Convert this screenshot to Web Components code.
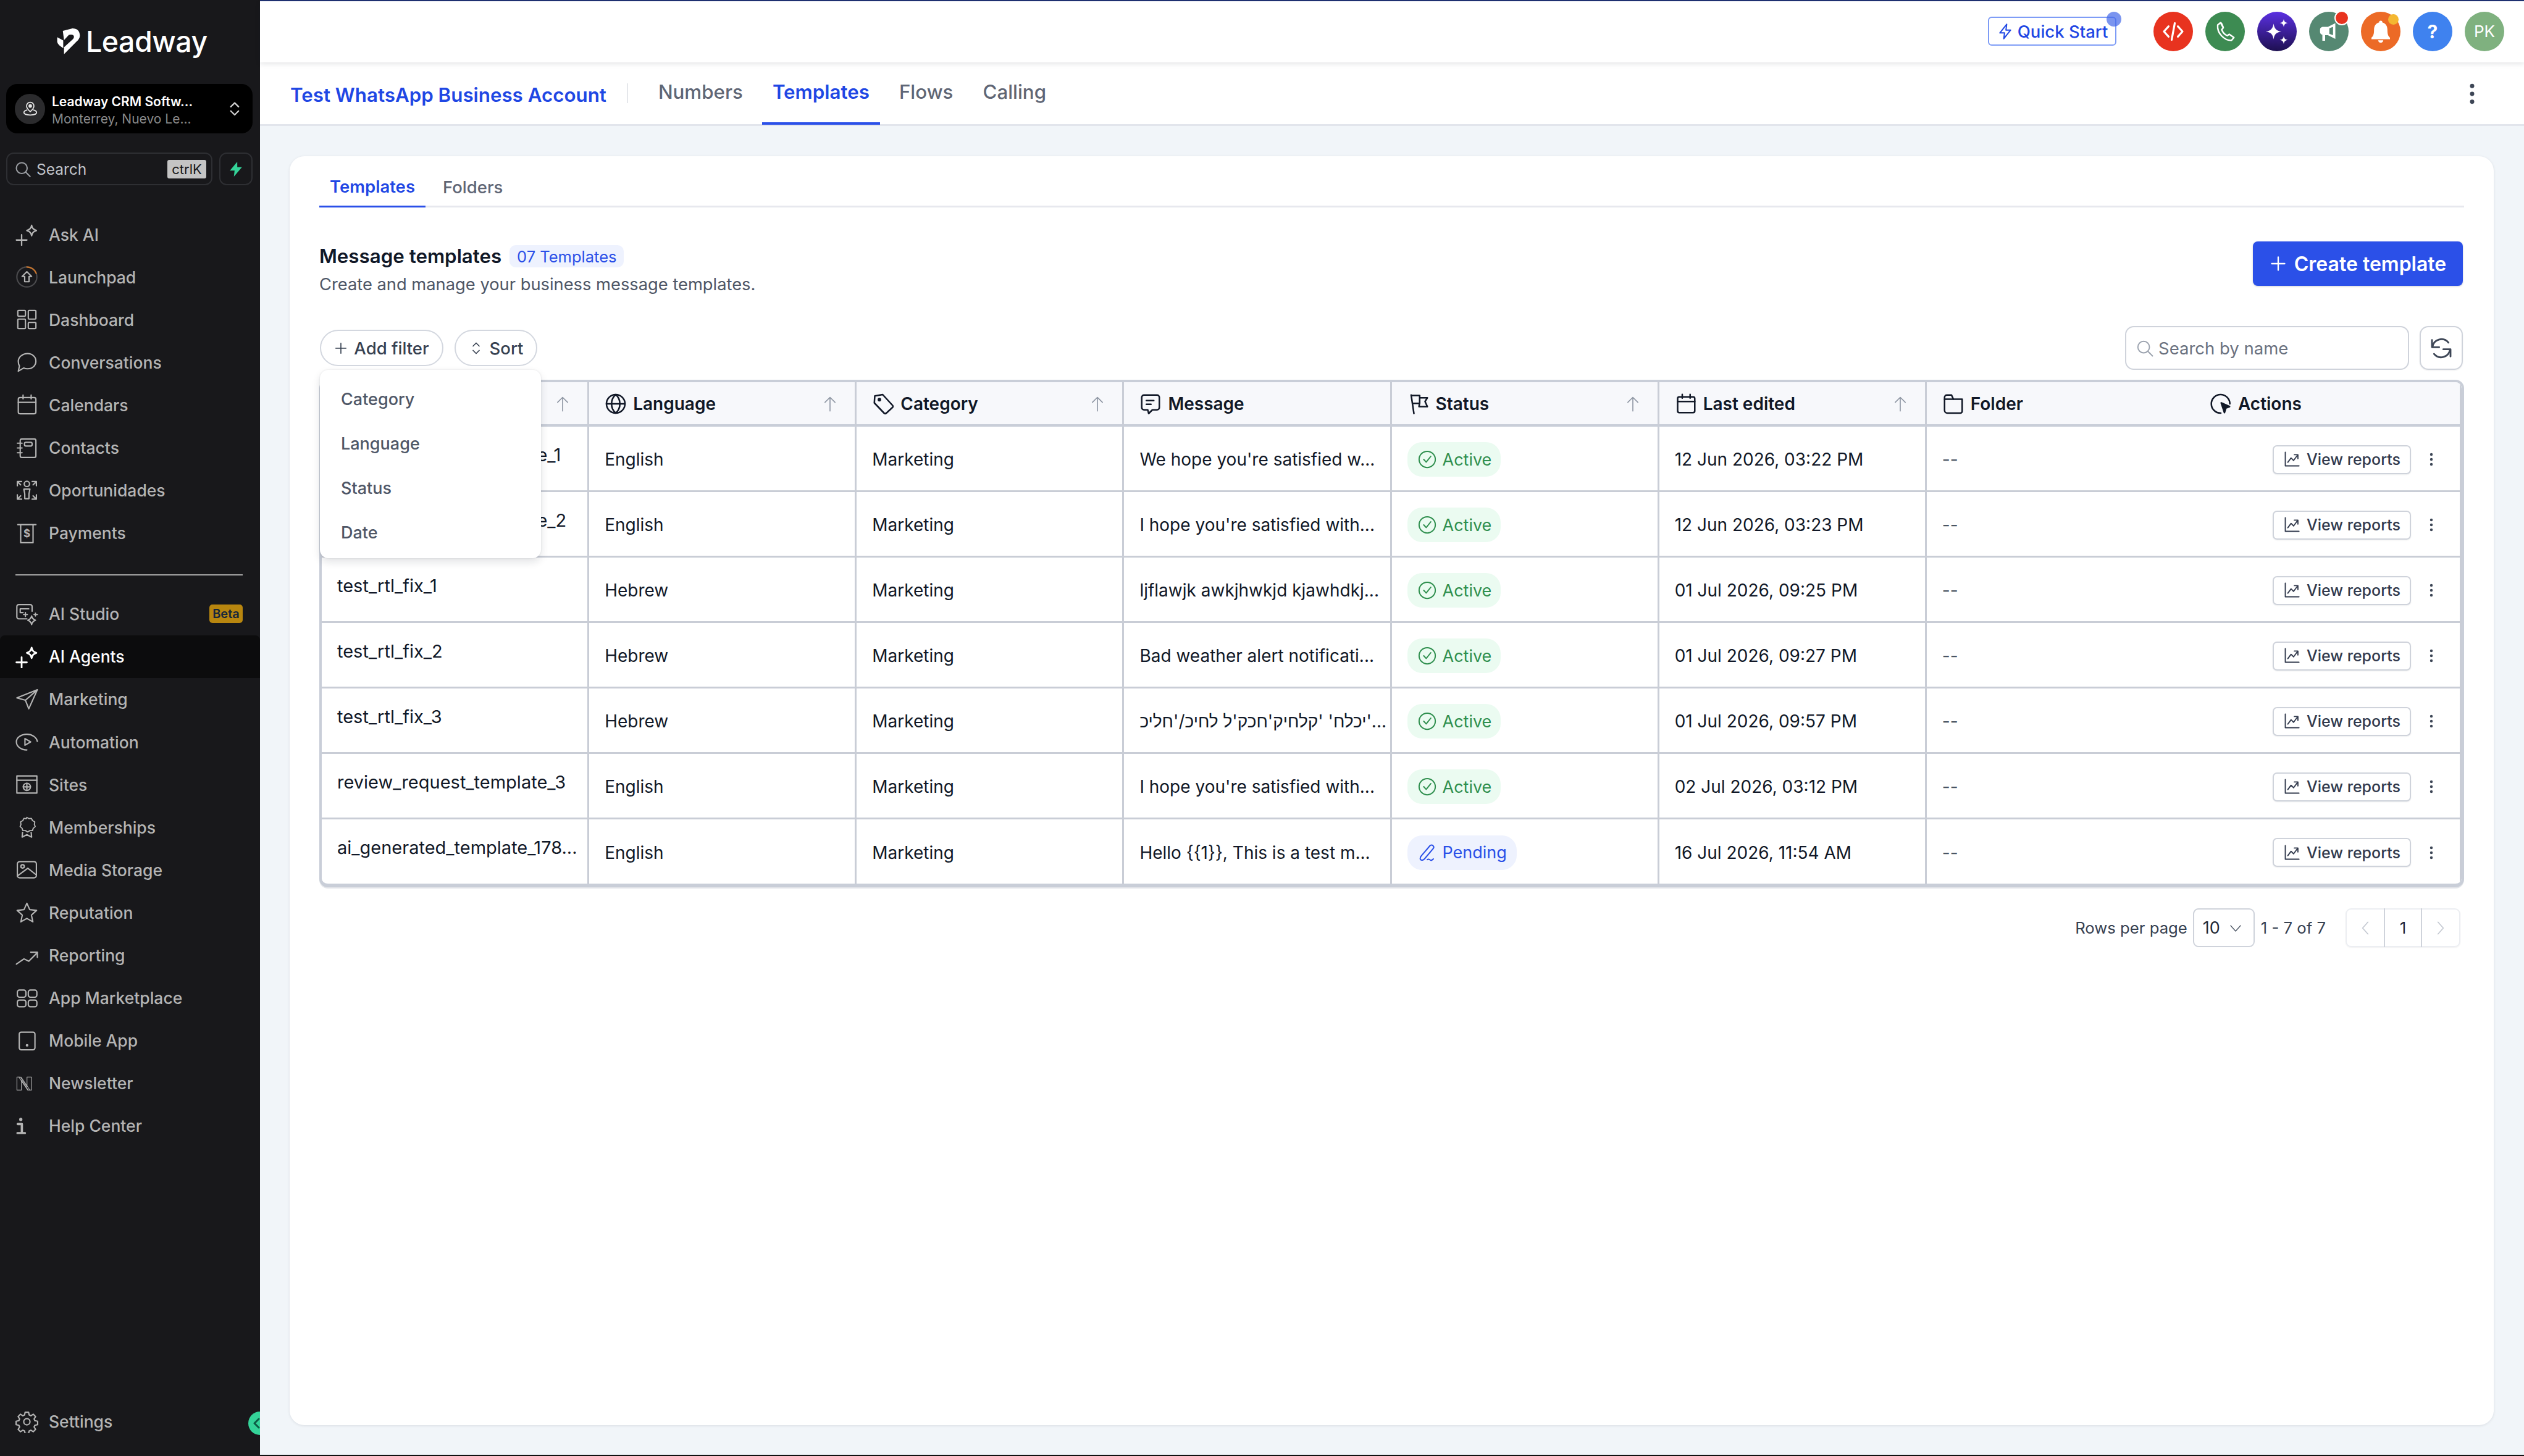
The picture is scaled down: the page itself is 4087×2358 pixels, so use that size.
<!DOCTYPE html>
<html lang="en"><head><meta charset="utf-8"><title>Leadway</title>
<style>
html,body{margin:0;padding:0;height:100%;background:#f1f5f9}
body{font-family:Inter,"Liberation Sans","Noto Sans",sans-serif;overflow:hidden}
</style></head>
<body>
<lw-app>
  <lw-sidebar slot="side"></lw-sidebar>
  <lw-topbar slot="main"></lw-topbar>
  <lw-subnav slot="main"></lw-subnav>
  <lw-content slot="main">
    <lw-card>
      <lw-tabs></lw-tabs>
      <lw-heading></lw-heading>
      <lw-toolbar></lw-toolbar>
      <lw-table></lw-table>
      <lw-pager></lw-pager>
    </lw-card>
  </lw-content>
</lw-app>
<script>
const ICONS={
askai:'<path d="M1 18h11M6.5 12.5v11"/><path d="M17 2.5c.6 3 1.6 4.3 5 5.5-3.4 1.2-4.4 2.5-5 5.5-.6-3-1.6-4.3-5-5.5 3.4-1.2 4.4-2.500 5-5.500z"/>',
launch:'<circle cx="12" cy="12" r="10.500" stroke="#4a4a4d"/><path d="M12 1.500a10.500 10.500 0 0 1 9.800 6.700" stroke="#c8742c"/><path d="M12 6.500l5 5h-2.700v5.500H9.700v-5.500H7z"/>',
dash:'<rect x="2.500" y="2.500" width="8" height="6" rx=".8"/><rect x="13.500" y="2.500" width="8" height="9" rx=".8"/><rect x="2.500" y="11.500" width="8" height="10" rx=".8"/><rect x="13.500" y="15" width="8" height="6.500" rx=".8"/>',
chat:'<path d="M12.800 3c5 0 8.700 3.500 8.700 8s-3.700 8-8.700 8c-1.500 0-2.900-.3-4-.9L3 21.500l1.200-5.400C3.400 14.700 3 13 3 11.200 3 6.500 7.500 3 12.800 3z"/>',
cal:'<rect x="3" y="4.500" width="18.500" height="17" rx="1.800"/><path d="M3 9.500h18.500M8 1.800v4M16.500 1.800v4"/>',
contacts:'<rect x="5" y="2.500" width="16.500" height="19.500" rx="1.800"/><rect x="9.500" y="6" width="8" height="4" rx="1.500"/><path d="M2 7h5M2 12h5M2 17h5"/>',
opp:'<circle cx="12" cy="5" r="2.800"/><path d="M8.800 10.500h6.400l-1 5v5h-4.400v-5z"/><path d="M2 7V2.500h4.500M2 2.500l3.500 3.500M22 7V2.500h-4.500M22 2.500L18.500 6M2 16.500V21h4.500M2 21l3.500-3.500M22 16.500V21h-4.500M22 21l-3.500-3.500"/>',
pay:'<path d="M2.500 3h19M5.500 3V22h13V3"/><text x="12" y="16" font-size="11" font-weight="700" text-anchor="middle" fill="currentColor" stroke="none" font-family="Inter">$</text>',
studio:'<path d="M12 17H3.500A2 2 0 0 1 1.500 15V4A2 2 0 0 1 3.500 2h12a2 2 0 0 1 2 2v5"/><path d="M5 6.500h9M5 6.500v4h3"/><path d="M17 14c.5 2.500 1.300 3.500 4 4.500-2.700 1-3.500 2-4 4.500-.5-2.500-1.300-3.500-4-4.500 2.700-1 3.500-2 4-4.500z"/><path d="M10.500 10.500v4M8.500 12.500h4M21 11v3M19.500 12.500h3.500"/>',
plane:'<path d="M23 2L1.500 10.500l9 2.500 3.500 9zM10.500 13L23 2"/>',
auto:'<path d="M23 11.500a11 9 0 0 0-11-7.500C6 4 1 7.500 1 12s4.500 8.500 11 8.500"/><path d="M10 8.500l6 3.500-6 3.500z"/>',
site:'<rect x="1.500" y="3" width="21" height="18"/><path d="M1.500 7.500h21"/><circle cx="12" cy="14.500" r="3.800"/><path d="M8.200 14.500h7.600M12 10.700v7.600"/>',
medal:'<path d="M12 2l2.500 1.500 3-.3 1.300 2.700 2.700 1.500-.5 3 1 2.600-2.300 2-1 2.800-3 0-2.700 1.600-2.700-1.600-3 0-1-2.800-2.300-2 1-2.600-.5-3 2.700-1.500 1.300-2.700 3 .3z" transform="translate(1.400 0) scale(.88)"/><path d="M7.500 17.500L7 22.500l5-2.500 5 2.500-.5-5"/>',
media:'<rect x="2" y="3.500" width="20" height="17" rx="2.500"/><circle cx="7.500" cy="8.500" r="1.800"/><path d="M2 18.500l11-8 9 7"/>',
star:'<path d="M12 2.500l3 6.700 7.200.8-5.400 4.900 1.500 7.100L12 18.400l-6.300 3.600 1.500-7.100L1.800 10l7.200-.8z"/>',
trend:'<path d="M1 21l8-5.500 5 2.500L23 9"/><path d="M16 8.500h7V14"/>',
apps:'<rect x="2" y="3.500" width="9" height="7.500" rx="2.200"/><rect x="13.500" y="3.500" width="9" height="7.500" rx="2.200"/><rect x="2" y="14" width="9" height="7" rx="2.200"/><rect x="13.500" y="14" width="9" height="7" rx="2.200"/>',
mobile:'<rect x="4" y="3" width="16.500" height="18.500" rx="2"/><circle cx="12.200" cy="16.800" r=".7" fill="currentColor"/>',
news:'<path d="M2 3.500h4.500l9 13V3.500h6V21h-4.500l-9-13v13H2z" stroke-width=".9"/><path d="M4.500 3.500l12 17.500M7.500 3.500l11.500 17" stroke-width=".9"/>',
info:'<circle cx="6.500" cy="4.500" r="2" fill="currentColor" stroke="none"/><path d="M2.800 10h5v10.500M2.500 21h9" stroke-width="2.800"/>',
cog:'<circle cx="12" cy="12" r="3.300"/><path d="M10.200 2h3.600l.6 2.900 1.800.8 2.500-1.600 2.500 2.500-1.600 2.500.8 1.800 2.900.6v3.600l-2.900.6-.8 1.800 1.600 2.500-2.500 2.500-2.500-1.600-1.800.8-.6 2.900h-3.600l-.6-2.900-1.800-.8-2.500 1.600-2.500-2.500 1.600-2.500-.8-1.800-2.900-.6v-3.600l2.900-.6.8-1.800-1.600-2.500 2.500-2.500 2.500 1.600 1.800-.8z"/>',
search:'<circle cx="10.500" cy="10.500" r="7.500"/><path d="M16 16l6 6"/>',
pin:'<path d="M12 2.500a5.500 5.500 0 0 0-5.500 5.500c0 3.500 5.500 8.500 5.500 8.500s5.500-5 5.500-8.500A5.500 5.500 0 0 0 12 2.500z"/><circle cx="12" cy="8" r="1.800" fill="currentColor"/><path d="M7 14c-2.500.8-4.500 2-4.500 3.800 0 2.200 4 3.700 9.500 3.700s9.500-1.500 9.500-3.700c0-1.800-2-3-4.500-3.800"/>',
updown:'<path d="M7 9.500l5-5 5 5M7 15l5 5 5-5"/>',
bolt:'<path d="M14 2L4.500 14H11l-1 8 9.500-12H13z"/>',
globe:'<circle cx="12" cy="12" r="10"/><path d="M2 12h20M12 2c-3.500 3-4.500 6.500-4.500 10s1 7 4.500 10c3.500-3 4.500-6.500 4.500-10S15.500 5 12 2z"/>',
tag:'<path d="M3 3.500L11.500 2 22 13.500a1.800 1.800 0 0 1 0 2.500l-6.500 6a1.800 1.800 0 0 1-2.500 0L2.500 11z"/><circle cx="8" cy="7.500" r="1.100" fill="currentColor"/>',
msg:'<path d="M5 2.500h14a2.500 2.500 0 0 1 2.500 2.500v11a2.500 2.500 0 0 1-2.500 2.500h-5L10 22.500l-1-4H5A2.500 2.500 0 0 1 2.500 16V5A2.500 2.500 0 0 1 5 2.500z"/><path d="M7.500 8.500h8M7.500 12.500h5"/>',
flag:'<path d="M4 2.500l3 20"/><path d="M4.200 3h9v8.500H6"/><path d="M13.500 5.500h8l-2.500 4 2.500 5.500h-9l.5-3.500"/>',
folder:'<path d="M2.500 19V5a2.500 2.500 0 0 1 2.500-2.500h5L12 7h9.500v13a2 2 0 0 1-2 2H5.500a3 3 0 0 1-3-3z"/><path d="M2.500 7H12"/>',
click:'<path d="M12 22A10 10 0 1 1 21.800 12"/><path d="M12.500 11l9 4-4 1.500-1.500 5z" fill="currentColor"/>',
up:'<path d="M12 22V3M5 10l7-7 7 7"/>',
plus:'<path d="M12 3v18M3 12h18"/>',
sort:'<path d="M7 8.500l5-5 5 5M7 15.500l5 5 5-5"/>',
refresh:'<path d="M3.500 10.500A8.800 8.800 0 0 1 19 6.500"/><path d="M20.500 13.500A8.800 8.800 0 0 1 5 17.500"/><path d="M3 4v7h7M21 20v-7h-7"/>',
chart:'<path d="M3 2v19h19"/><path d="M6.500 16l4.500-6 3.500 3.500L20 6"/><path d="M15.500 5.500H20.500V11"/>',
dots:'<circle cx="12" cy="4" r="2.200" fill="currentColor" stroke="none"/><circle cx="12" cy="12" r="2.200" fill="currentColor" stroke="none"/><circle cx="12" cy="20" r="2.200" fill="currentColor" stroke="none"/>',
check:'<circle cx="12" cy="12" r="10.500"/><path d="M7.500 12l3.200 3.500 6-7.500"/>',
pen:'<path d="M4 16.500L15.500 3a2.800 2.800 0 0 1 4.200 3.700L8.500 20c-1.500 1.700-4 2-5 1-1-1-.5-2.800.5-4.500z"/><path d="M12 21c2-1.500 3-.5 4 .5s2 .5 4-1.500"/>',
down:'<path d="M4 8l8 9 8-9"/>',
left:'<path d="M16 3L8 12l8 9"/>',
right:'<path d="M8 3l8 9-8 9"/>',
code:'<path d="M7.500 7L3 12l4.500 5M16.500 7l4.500 5-4.500 5M13.500 4l-3 16"/>',
phone:'<path d="M7 2.500L4 5c-.5 5 1.500 9 4.500 12s6.500 5 10.500 4.500l2.500-3-5-3.500-2.200 1.500c-2.500-1-5-4-6-6.500L10 8z"/><path d="M8 3c0 0 2 4 2 5"/>',
spark:'<path d="M9 5c.7 4.500 2.300 6.300 7 7-4.700.7-6.300 2.500-7 7-.7-4.500-2.300-6.300-7-7 4.700-.7 6.300-2.500 7-7zM18 1c.4 2.300 1.200 3.100 3.500 3.500-2.300.4-3.100 1.200-3.500 3.500-.4-2.300-1.200-3.100-3.500-3.500C16.800 4.100 17.600 3.300 18 1zM18 16c.4 2.300 1.200 3.100 3.500 3.500-2.300.4-3.100 1.200-3.500 3.500-.4-2.300-1.200-3.100-3.500-3.500 2.300-.4 3.100-1.200 3.500-3.500z" fill="currentColor" stroke="none"/>',
mega:'<path d="M19 3v17l-8-4H8v6H5v-6.500c-1.500-.3-2.500-1.300-2.500-3V10c0-2 1.500-3 3.500-3h5z" fill="currentColor" stroke="none"/><path d="M16.500 7l-4 1.500v6l4 1.500z" fill="#558872" stroke="none"/>',
bell:'<path d="M12 1.500a1.500 1.500 0 0 1 1.500 1.700C17 4 18.500 7 18.500 10.500c0 4 .7 6 2.500 7.500v1.500H3V18c1.800-1.500 2.500-3.500 2.500-7.500C5.500 7 7 4 10.500 3.200A1.500 1.500 0 0 1 12 1.500zM9.500 20.500h5a2.500 2.500 0 0 1-5 0z" fill="currentColor" stroke="none"/>',
chev:'<path d="M15 5l-7 7 7 7"/>'
};
function def(name,css,html,init){
  customElements.define(name,class extends HTMLElement{
    connectedCallback(){
      if(this.shadowRoot)return;
      const r=this.attachShadow({mode:'open'});
      const h=typeof html==='function'?html(this):html;
      r.innerHTML='<style>'+css+'</style>'+h;
      if(init)init(this,r);
    }
  });
}
const ic=(n,s,sw,extra)=>`<lw-icon name="${n}" size="${s}" sw="${sw||1.6}"${extra||''}></lw-icon>`;
customElements.define('lw-icon',class extends HTMLElement{
  connectedCallback(){
    if(this.shadowRoot)return;
    const s=this.getAttribute('size')||36, w=this.getAttribute('sw')||1.6;
    const r=this.attachShadow({mode:'open'});
    r.innerHTML=`<style>:host{display:inline-flex;flex:none;width:${s}px;height:${s}px}svg{display:block;width:100%;height:100%}</style><svg viewBox="0 0 24 24" fill="none" stroke="currentColor" stroke-width="${w}" stroke-linecap="round" stroke-linejoin="round">${ICONS[this.getAttribute('name')]||''}</svg>`;
  }
});

def('lw-app',`:host{display:flex;width:100%;height:100vh;background:#f1f5f9}
.s{display:flex;flex:none;width:421px}.m{display:flex;flex-direction:column;flex:1;min-width:0;border-top:2px solid #1f3272;border-bottom:2px solid #111;box-sizing:border-box;height:100%}`,
`<div class="s"><slot name="side"></slot></div><div class="m"><slot name="main"></slot></div>`);

def('lw-nav-item',`:host{display:flex;align-items:center;height:69.1px;padding:0 28px 0 25px;box-sizing:border-box;color:#b4b4b4;font-size:26.5px;font-weight:500;position:relative}
:host([active]){background:#0c0c0d;color:#fff;border-radius:8px 8px 0 0}
.i{width:38px;height:38px;margin-right:16px;display:flex;align-items:center;justify-content:flex-start;flex:none}
.b{margin-left:auto;background:#b8860f;color:#16263c;font-size:20px;font-weight:600;width:54px;height:30px;border-radius:5px;display:flex;align-items:center;justify-content:center}`,
h=>`<span class="i">${ic(h.getAttribute('icon'),h.getAttribute('isize')||37,h.getAttribute('sw')||1.4)}</span><slot></slot>${h.hasAttribute('badge')?`<span class="b">${h.getAttribute('badge')}</span>`:''}`);

def('lw-sidebar',`:host{display:flex;flex-direction:column;width:421px;height:100%;background:#18181b;position:relative;overflow:hidden;box-sizing:border-box;font-family:Inter,"Liberation Sans",sans-serif}
.logo{display:flex;align-items:center;height:68px;margin:33px 0 0 91px;color:#fff;gap:9px;font-size:46.500px;font-weight:500;letter-spacing:-.5px;line-height:1}
.logo svg{width:39px;height:46px;flex:none}
.loc{margin:35px 12px 0 10px;height:80px;background:#000;border-radius:18px;display:flex;align-items:center;padding:0 14px 0 14px;gap:11px}
.av{width:49px;height:49px;border-radius:50%;background:#2b2b2d;display:flex;align-items:center;justify-content:center;color:#e7e7e7}
.tx{flex:1;min-width:0;padding-top:6px}.t1{color:#fff;font-size:21px;font-weight:600;line-height:28px;white-space:nowrap}.t2{color:#8a8a8a;font-size:21px;line-height:28px;white-space:nowrap}
.ch{color:#cfcfcf;display:flex}
.sr{display:flex;gap:11px;margin:31px 12px 0 10px}
.box{height:53px;border:2px solid #2e2f33;border-radius:12px;box-sizing:border-box;display:flex;align-items:center}
.q{flex:1;padding:0 8px 0 11px;gap:8px;color:#c0c3c9;font-size:24.500px}.q lw-icon{color:#9b9ea3}
.k{margin-left:auto;background:#c4c4c4;color:#18181b;font-size:22px;border-radius:3px;width:63px;height:30px;display:flex;align-items:center;justify-content:center}
.z{width:54px;justify-content:center;color:#34d399}
nav{display:flex;flex-direction:column;margin-top:45px}
.sep{height:2px;background:#a4a4a4;margin:32px 28px 28px 25px}
.sp{flex:1}
.st{margin-bottom:21px}
.col{position:absolute;right:-19px;bottom:34px;width:38px;height:38px;border-radius:50%;background:#34d399;color:#0c5c45;display:flex;align-items:center;padding-left:2px;box-sizing:border-box}`,
`<div class="logo"><svg viewBox="15 15 120 135"><path d="M20 62L50 78V116Q22 100 20 85Z" fill="#fff"/><path d="M48 30L96 18Q130 18 133 52Q133 70 118 82L54 146V112L98 72Q108 60 100 52Q92 46 78 50L54 76Z" fill="#fff"/></svg><span>Leadway</span></div>
<div class="loc"><span class="av">${ic('pin',26,1.6)}</span><div class="tx"><div class="t1">Leadway CRM Softw...</div><div class="t2">Monterrey, Nuevo Le...</div></div><span class="ch">${ic('updown',30,1.8)}</span></div>
<div class="sr"><div class="box q">${ic('search',28,1.8)}<span>Search</span><span class="k">ctrlK</span></div><div class="box z"><svg width="26" height="28" viewBox="0 0 24 24" fill="currentColor"><path d="M14 1L3 14h7l-1 9 12-14h-7z"/></svg></div></div>
<nav>
<lw-nav-item icon="askai" sw="1.5">Ask AI</lw-nav-item>
<lw-nav-item icon="launch">Launchpad</lw-nav-item>
<lw-nav-item icon="dash">Dashboard</lw-nav-item>
<lw-nav-item icon="chat">Conversations</lw-nav-item>
<lw-nav-item icon="cal">Calendars</lw-nav-item>
<lw-nav-item icon="contacts">Contacts</lw-nav-item>
<lw-nav-item icon="opp">Oportunidades</lw-nav-item>
<lw-nav-item icon="pay">Payments</lw-nav-item>
<div class="sep"></div>
<lw-nav-item icon="studio" badge="Beta">AI Studio</lw-nav-item>
<lw-nav-item icon="askai" active sw="1.8">AI Agents</lw-nav-item>
<lw-nav-item icon="plane">Marketing</lw-nav-item>
<lw-nav-item icon="auto">Automation</lw-nav-item>
<lw-nav-item icon="site">Sites</lw-nav-item>
<lw-nav-item icon="medal">Memberships</lw-nav-item>
<lw-nav-item icon="media">Media Storage</lw-nav-item>
<lw-nav-item icon="star">Reputation</lw-nav-item>
<lw-nav-item icon="trend">Reporting</lw-nav-item>
<lw-nav-item icon="apps">App Marketplace</lw-nav-item>
<lw-nav-item icon="mobile">Mobile App</lw-nav-item>
<lw-nav-item icon="news" isize="29">Newsletter</lw-nav-item>
<lw-nav-item icon="info" isize="32">Help Center</lw-nav-item>
</nav><div class="sp"></div>
<lw-nav-item class="st" icon="cog">Settings</lw-nav-item>
<div class="col">${ic('chev',24,3)}</div>`);

def('lw-round',`:host{display:flex;width:64px;height:64px;border-radius:50%;align-items:center;justify-content:center;color:#fff;position:relative;font-size:26px;font-family:Inter,sans-serif}`,
`<slot></slot>`);

def('lw-topbar',`:host{display:flex;align-items:center;justify-content:flex-end;height:99px;flex:none;background:#fff;box-shadow:0 2px 8px rgba(15,23,42,.12);position:relative;z-index:2;padding-right:32px;box-sizing:border-box}
.qs{position:relative;display:flex;align-items:center;justify-content:center;gap:6px;width:208px;height:47px;box-sizing:border-box;border:2px solid #7e9cf6;border-radius:6px;color:#1f47e4;font-size:27.500px;font-weight:500;margin-right:60px;margin-top:-2px;background:#fff}
.qs i{position:absolute;right:-10px;top:-10px;width:24px;height:24px;border-radius:50%;background:rgba(66,102,232,.7)}
.r{display:flex;gap:20px;margin-top:-2px}
lw-round i{position:absolute;border-radius:50%}`,
`<div class="qs">${ic('bolt',28,1.7)}<span>Quick Start</span><i></i></div>
<div class="r">
<lw-round style="background:#e8331f">${ic('code',40,1.9)}</lw-round>
<lw-round style="background:#3d8b52">${ic('phone',36,1.6)}</lw-round>
<lw-round style="background:linear-gradient(#5b30e2,#1d0f50)">${ic('spark',44)}</lw-round>
<lw-round style="background:#558872">${ic('mega',36)}<i style="right:-1px;top:-2px;width:24px;height:24px;background:#e8331f;border:2px solid #fff;box-sizing:border-box"></i></lw-round>
<lw-round style="background:#ec6a26">${ic('bell',40)}<i style="right:3px;top:4px;width:17px;height:17px;background:#f4b731"></i></lw-round>
<lw-round style="background:#3f82ef"><span style="font-weight:700;font-size:30px">?</span></lw-round>
<lw-round style="background:#7fb17f">PK</lw-round>
</div>`);

def('lw-subnav',`:host{display:flex;align-items:center;height:103px;flex:none;background:#fff;border-bottom:3px solid #e2e5ec;box-sizing:border-box;padding:0 65px 0 49px;font-size:31.300px;color:#5f6675;font-weight:500;position:relative}
.acct{color:#1f47e4;font-weight:600;font-size:31.300px;padding-right:33px;margin-top:5px;white-space:nowrap}
.div{width:2px;height:32px;background:#e5e7eb;margin-right:32px}
.t{padding:0 17px;height:100px;display:flex;align-items:center;box-sizing:border-box;padding-bottom:3px;margin-right:14px;white-space:nowrap;border-bottom:4px solid transparent;position:relative;top:1px}
.t:first-of-type{}
.a{color:#1f47e4;font-weight:600;border-bottom-color:#2b50e8}
.d{margin-left:auto;color:#3d4656;display:flex;padding-top:2px}`,
`<span class="acct">Test WhatsApp Business Account</span><span class="div"></span><span class="t" style="margin-left:0">Numbers</span><span class="t a">Templates</span><span class="t">Flows</span><span class="t">Calling</span><span class="d">${ic('dots',38,1.6)}</span>`);

def('lw-content',`:host{display:flex;flex:1;min-height:0;padding:49px 49px 48px 48px;box-sizing:border-box;background:#f1f5f9}`,`<slot></slot>`);
def('lw-card',`:host{display:block;flex:1;background:#fff;border-radius:24px;box-shadow:0 1px 4px rgba(15,23,42,.1);padding:24px 48px;box-sizing:border-box}`,`<slot></slot>`);

def('lw-tabs',`:host{display:flex;height:59px;border-bottom:3px solid #e7e8ee;box-sizing:border-box;font-size:27.500px;font-weight:500;color:#5f6675}
span{display:flex;align-items:center;padding:0 17px 5px;height:56px;margin-right:11px;box-sizing:border-box}
.a{color:#1f47e4;font-weight:600;border-bottom:3px solid #2b50e8;height:59px;padding-bottom:7px}`,
`<span class="a">Templates</span><span>Folders</span>`);

def('lw-heading',`:host{display:flex;justify-content:space-between;align-items:flex-start;margin-top:55px;height:88px;padding-right:2px}
.l{padding-top:6px}.h{display:flex;align-items:center;gap:13px;height:36px}
b{font-size:31.300px;font-weight:600;color:#111827;white-space:nowrap}
.c{background:#eef2fe;color:#2b50e8;font-size:25.500px;height:36px;width:185px;border-radius:10px;display:flex;align-items:center;justify-content:center;white-space:nowrap}
p{margin:11px 0 0;font-size:27.300px;line-height:34px;color:#4f5767}
button{font:inherit;display:flex;align-items:center;justify-content:center;gap:12px;width:340px;height:72px;border:0;border-radius:8px;background:#2b50e8;color:#fff;font-size:32px;font-weight:600;box-shadow:0 1px 3px rgba(15,23,42,.2)}`,
`<div class="l"><div class="h"><b>Message templates</b><span class="c">07 Templates</span></div><p>Create and manage your business message templates.</p></div><button>${ic('plus',28,2)}<span>Create template</span></button>`);

def('lw-filter-menu',`:host{position:absolute;left:1px;top:71px;width:358px;height:305px;background:#fff;border-radius:14px;box-shadow:0 0 3px rgba(15,23,42,.1),0 6px 14px rgba(15,23,42,.12);z-index:5;display:flex;flex-direction:column;padding:11px 0 6px;box-sizing:border-box;font-size:27px;color:#4f5767}
span{height:72px;display:flex;align-items:center;padding-left:34px;flex:none}`,
`<span>Category</span><span>Language</span><span>Status</span><span>Date</span>`);

def('lw-toolbar',`:host{display:flex;align-items:center;gap:17px;height:71px;margin-top:49px;margin-bottom:-1px;padding-right:2px;position:relative;font-size:27.500px;color:#374151;font-weight:500}
.p{display:flex;align-items:center;justify-content:center;gap:10px;height:59px;border:2px solid #d3d7df;border-radius:30px;box-sizing:border-box;white-space:nowrap}
.s{margin-left:auto;width:460px;height:71px;border:2px solid #cfd3db;border-radius:14px;box-sizing:border-box;display:flex;align-items:center;gap:7px;padding-left:15px;color:#6b7280;font-weight:400}
.s lw-icon{color:#9ca3af}
.r{width:70px;height:71px;border:2px solid #cfd3db;border-radius:14px;box-sizing:border-box;display:flex;align-items:center;justify-content:center;color:#3d4656;box-shadow:0 1px 2px rgba(15,23,42,.08)}
.wrap{display:flex;gap:18px;margin-left:1px}`,
`<div class="wrap"><span class="p" style="width:200px">${ic('plus',22,1.8)}<span>Add filter</span></span><span class="p" style="width:134px">${ic('sort',24,1.7)}<span>Sort</span></span></div><lw-filter-menu></lw-filter-menu><div class="s">${ic('search',30,1.5)}<span>Search by name</span></div><div class="r">${ic('refresh',40,1.7)}</div>`);

def('lw-status',`:host{display:inline-flex;align-items:center;gap:10px;height:56px;border-radius:24px;padding:0 15px 0 17px;font-size:27px;box-sizing:border-box;white-space:nowrap}
:host([kind=active]){background:#ebfbf1;color:#2f8f4e}:host([kind=pending]){background:#eef2fe;color:#2b50e8;padding-right:16px}`,
h=>h.getAttribute('kind')==='active'?`${ic('check',30,1.6)}<slot></slot>`:`${ic('pen',30,1.6)}<slot></slot>`);

const ROWS=[
['review_request_template_1','English','We hope you\'re satisfied w...','Active','12 Jun 2026, 03:22 PM'],
['review_request_template_2','English','I hope you\'re satisfied with...','Active','12 Jun 2026, 03:23 PM'],
['test_rtl_fix_1','Hebrew','ljflawjk awkjhwkjd kjawhdkj...','Active','01 Jul 2026, 09:25 PM'],
['test_rtl_fix_2','Hebrew','Bad weather alert notificati...','Active','01 Jul 2026, 09:27 PM'],
['test_rtl_fix_3','Hebrew',"\u200F'יכלח' 'קלחיק'חכק'ל לחיכ/'חליכ...",'Active','01 Jul 2026, 09:57 PM'],
['review_request_template_3','English','I hope you\'re satisfied with...','Active','02 Jul 2026, 03:12 PM'],
['ai_generated_template_178...','English','Hello {{1}}, This is a test m...','Pending','16 Jul 2026, 11:54 AM']];
const HEAD=[['tag','Name',1],['globe','Language',1],['tag','Category',1],['msg','Message',0],['flag','Status',1],['cal','Last edited',1],['folder','Folder',0],['click','Actions',0]];
def('lw-table',`:host{display:grid;grid-template-columns:repeat(8,minmax(0,1fr));margin-top:17px;border:solid #c9ced8;border-width:4px 4px 6px 4px;border-radius:14px;box-shadow:0 2px 0 #e5e7eb;font-size:28px;color:#111827;overflow:hidden;background:#fff}
.c{height:106px;display:flex;align-items:center;padding:3px 20px 0 25px;box-sizing:border-box;border-right:3px solid #c9cdd6;border-bottom:3px solid #c9cdd6;white-space:nowrap;min-width:0;overflow:hidden;font-family:Inter,"Liberation Sans","DejaVu Sans",sans-serif}
.c:nth-child(8n){border-right:0}
.c.last{border-bottom:0;height:104px}
.h{height:72px;background:#f7f8fb;border-bottom:4px solid #c9ced8;font-weight:600;gap:10px;padding:1px 26px 0 25px;color:#111827}
.h .ar{margin-left:auto;color:#8e96a3;display:flex}
.nm{padding-bottom:16px;font-size:29px}
.dash{color:#4b5563}
.a{justify-content:flex-end;padding-right:34px;gap:21px;color:#3d4656}
.vr{display:flex;align-items:center;justify-content:center;gap:10px;width:224px;height:47px;border:2px solid #cfd3db;border-radius:7px;box-sizing:border-box;font-size:25px;font-weight:500;color:#323a4d;box-shadow:0 1px 2px rgba(15,23,42,.08)}`,
()=>{
 let s='';
 HEAD.forEach(([i,t,a])=>{s+=`<div class="c h">${ic(i,36,1.7)}<span>${t}</span>${a?`<span class="ar">${ic('up',28,1.4)}</span>`:''}</div>`});
 ROWS.forEach((r,n)=>{const l=n===ROWS.length-1?' last':'';
  s+=`<div class="c${l}"><span class="nm">${r[0]}</span></div><div class="c${l}">${r[1]}</div><div class="c${l}">Marketing</div><div class="c${l}"><span>${r[2]}</span></div><div class="c${l}"><lw-status kind="${r[3].toLowerCase()}">${r[3]}</lw-status></div><div class="c${l}">${r[4]}</div><div class="c${l} dash">--</div><div class="c a${l}"><span class="vr">${ic('chart',28,1.6)}<span>View reports</span></span>${ic('dots',24,1.6)}</div>`});
 return s;
});

def('lw-pager',`:host{display:flex;justify-content:flex-end;align-items:center;margin-top:34px;height:63px;font-size:25.700px;color:#374151;padding-right:6px;white-space:nowrap}
.sel{display:flex;align-items:center;gap:13px;width:100px;height:63px;margin:0 10px 0 9px;padding-left:14px;border:2px solid #cfd3db;border-radius:9px;box-sizing:border-box;font-size:27px;color:#1f2937}
.sel lw-icon{color:#4b5563}
.g{display:flex;margin-left:32px;width:186px;height:63px;border:2px solid #eceef2;border-radius:9px;box-sizing:border-box;box-shadow:0 1px 2px rgba(15,23,42,.06)}
.g span{width:60px;display:flex;align-items:center;justify-content:center;color:#c2c7d0}
.g .m{border:solid #cfd3db;border-width:0 2px;color:#1f2937;font-size:26px;margin:-2px 0;box-sizing:content-box;width:58px}`,
`<span>Rows per page</span><span class="sel"><span>10</span>${ic('down',24,1.3)}</span><span>1 - 7 of 7</span><span class="g"><span>${ic('left',26,1.5)}</span><span class="m">1</span><span>${ic('right',26,1.5)}</span></span>`);
</script>
</body></html>
